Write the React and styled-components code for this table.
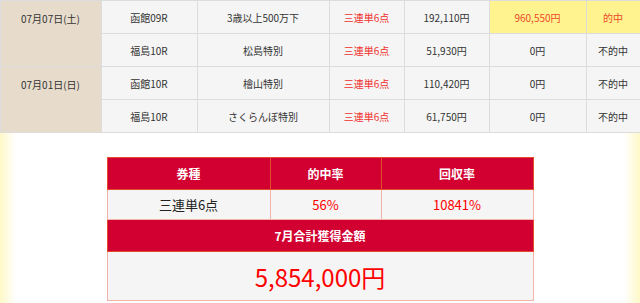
import React from "react";
import styled, { createGlobalStyle } from "styled-components";

const Global = createGlobalStyle`
  html, body { margin: 0; padding: 0; }
  body {
    width: 640px;
    min-height: 303px;
    font-family: "Noto Sans CJK JP", "Noto Sans", sans-serif;
    background: linear-gradient(to right, #fff8c8 0px, #ffffff 16px, #ffffff 624px, #fff8c8 640px);
    overflow: hidden;
  }
`;

const Page = styled.div`
  display: flex;
  flex-direction: column;
  align-items: center;
`;

const Col = styled.col`
  width: ${(p) => p.$w}px;
`;

const ResultTable = styled.table`
  width: 640px;
  border-collapse: collapse;
  table-layout: fixed;
  font-size: 10px;
  color: #333;
  margin-bottom: 24px;
`;

const Cell = styled.td`
  height: 32px;
  padding: 0;
  text-align: center;
  vertical-align: middle;
  border: 1px solid #dcdcdc;
  background: ${(p) => (p.$hit ? "#fef38f" : "#f4f5f4")};
  color: ${(p) => (p.$red ? "#f0312e" : p.$hit ? "#ee4a2a" : "#333")};
  white-space: nowrap;
`;

const DateCell = styled(Cell)`
  background: #e7dccb;
  vertical-align: top;
  padding-top: 10px;
  height: auto;
`;

const Summary = styled.table`
  width: 426px;
  border-collapse: collapse;
  table-layout: fixed;
  border: 1px solid #f6b4aa;
`;

const Head = styled.th`
  height: 31px;
  padding: 0;
  background: #d10030;
  color: #fff;
  font-size: 12px;
  font-weight: 700;
  border: 1px solid #e24b2c;
  border-top-color: #e84a32;
`;

const Data = styled.td`
  height: 29px;
  padding: 0;
  text-align: center;
  background: #f4f5f4;
  font-size: 13px;
  color: ${(p) => (p.$red ? "#ff0000" : "#222")};
  border: 1px solid #f3b3a8;
`;

const Total = styled.td`
  height: 48px;
  padding: 0;
  text-align: center;
  background: #f4f5f4;
  font-size: 24px;
  color: #ff0000;
  border: 1px solid #f3b3a8;
`;

const rows = [
  { date: "07月07日(土)", race: "函館09R", name: "3歳以上500万下", bet: "三連単6点", pay: "192,110円", win: "960,550円", res: "的中", hit: true },
  { race: "福島10R", name: "松島特別", bet: "三連単6点", pay: "51,930円", win: "0円", res: "不的中" },
  { date: "07月01日(日)", race: "函館10R", name: "檜山特別", bet: "三連単6点", pay: "110,420円", win: "0円", res: "不的中" },
  { race: "福島10R", name: "さくらんぼ特別", bet: "三連単6点", pay: "61,750円", win: "0円", res: "不的中" },
];

const resultCols = [101, 96, 132, 75, 85, 97, 54];
const summaryCols = [163, 111, 152];

export default function App() {
  return (
    <Page>
      <Global />
      <ResultTable>
        <colgroup>
          {resultCols.map((w, i) => (
            <Col key={i} $w={w} />
          ))}
        </colgroup>
        <tbody>
          {rows.map((r, i) => (
            <tr key={i}>
              {r.date && <DateCell rowSpan={2}>{r.date}</DateCell>}
              <Cell>{r.race}</Cell>
              <Cell>{r.name}</Cell>
              <Cell $red>{r.bet}</Cell>
              <Cell>{r.pay}</Cell>
              <Cell $hit={r.hit}>{r.win}</Cell>
              <Cell $hit={r.hit}>{r.res}</Cell>
            </tr>
          ))}
        </tbody>
      </ResultTable>
      <Summary>
        <colgroup>
          {summaryCols.map((w, i) => (
            <Col key={i} $w={w} />
          ))}
        </colgroup>
        <tbody>
          <tr>
            <Head>券種</Head>
            <Head>的中率</Head>
            <Head>回収率</Head>
          </tr>
          <tr>
            <Data>三連単6点</Data>
            <Data $red>56%</Data>
            <Data $red>10841%</Data>
          </tr>
          <tr>
            <Head colSpan={3}>7月合計獲得金額</Head>
          </tr>
          <tr>
            <Total colSpan={3}>5,854,000円</Total>
          </tr>
        </tbody>
      </Summary>
    </Page>
  );
}
